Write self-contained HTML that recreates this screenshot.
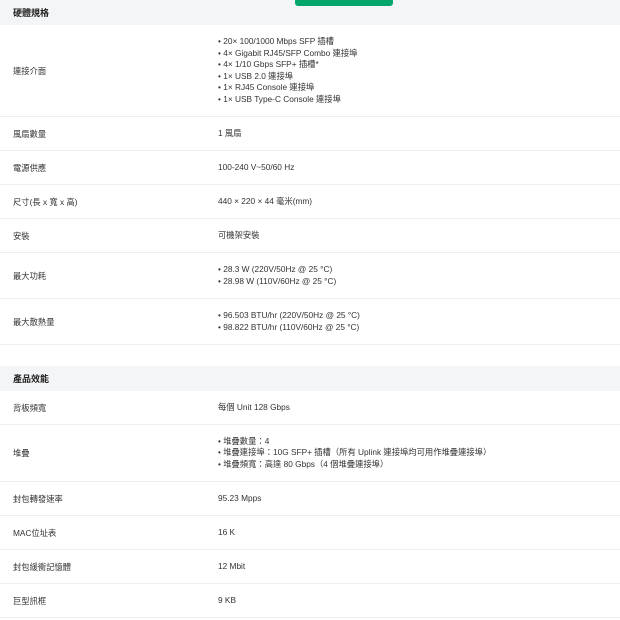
<!DOCTYPE html>
<html><head><meta charset="utf-8"><style>
*{margin:0;padding:0;box-sizing:border-box}
body{width:620px;height:620px;overflow:hidden;background:#fff;font-family:"Liberation Sans","Noto Sans CJK TC",sans-serif;font-size:8.3px;color:#333;position:relative}
.r{position:absolute;left:0;width:620px;border-bottom:1.5px solid #eeeff1;display:flex;align-items:center}
.h{background:#f4f5f7;font-weight:bold;font-size:9px;color:#222;border-bottom:none}
.l{position:absolute;left:13px}
.v{position:absolute;left:218px;line-height:11.5px}
.btn{position:absolute;left:295px;top:0;width:98px;height:6px;background:#05a66b;border-radius:0 0 3px 3px;z-index:2}
</style></head><body>
<div class="btn"></div>
<div class="r h" style="top:0;height:25px"><span class="l">硬體規格</span></div>
<div class="r" style="top:25px;height:92px"><span class="l">連接介面</span><div class="v">• 20× 100/1000 Mbps SFP 插槽<br>• 4× Gigabit RJ45/SFP Combo 連接埠<br>• 4× 1/10 Gbps SFP+ 插槽*<br>• 1× USB 2.0 連接埠<br>• 1× RJ45 Console 連接埠<br>• 1× USB Type-C Console 連接埠</div></div>
<div class="r" style="top:117px;height:34px"><span class="l">風扇數量</span><div class="v">1 風扇</div></div>
<div class="r" style="top:151px;height:34px"><span class="l">電源供應</span><div class="v">100-240 V~50/60 Hz</div></div>
<div class="r" style="top:185px;height:34px"><span class="l">尺寸(長 x 寬 x 高)</span><div class="v">440 × 220 × 44 毫米(mm)</div></div>
<div class="r" style="top:219px;height:34px"><span class="l">安裝</span><div class="v">可機架安裝</div></div>
<div class="r" style="top:253px;height:46px"><span class="l">最大功耗</span><div class="v">• 28.3 W (220V/50Hz @ 25 °C)<br>• 28.98 W (110V/60Hz @ 25 °C)</div></div>
<div class="r" style="top:299px;height:46px"><span class="l">最大散熱量</span><div class="v">• 96.503 BTU/hr (220V/50Hz @ 25 °C)<br>• 98.822 BTU/hr (110V/60Hz @ 25 °C)</div></div>
<div class="r h" style="top:366px;height:25px"><span class="l">產品效能</span></div>
<div class="r" style="top:391px;height:34px"><span class="l">背板頻寬</span><div class="v">每個 Unit 128 Gbps</div></div>
<div class="r" style="top:425px;height:57px"><span class="l">堆疊</span><div class="v">• 堆疊數量：4<br>• 堆疊連接埠：10G SFP+ 插槽（所有 Uplink 連接埠均可用作堆疊連接埠）<br>• 堆疊頻寬：高達 80 Gbps（4 個堆疊連接埠）</div></div>
<div class="r" style="top:482px;height:34px"><span class="l">封包轉發速率</span><div class="v">95.23 Mpps</div></div>
<div class="r" style="top:516px;height:34px"><span class="l">MAC位址表</span><div class="v">16 K</div></div>
<div class="r" style="top:550px;height:34px"><span class="l">封包緩衝記憶體</span><div class="v">12 Mbit</div></div>
<div class="r" style="top:584px;height:34px"><span class="l">巨型訊框</span><div class="v">9 KB</div></div>
</body></html>
